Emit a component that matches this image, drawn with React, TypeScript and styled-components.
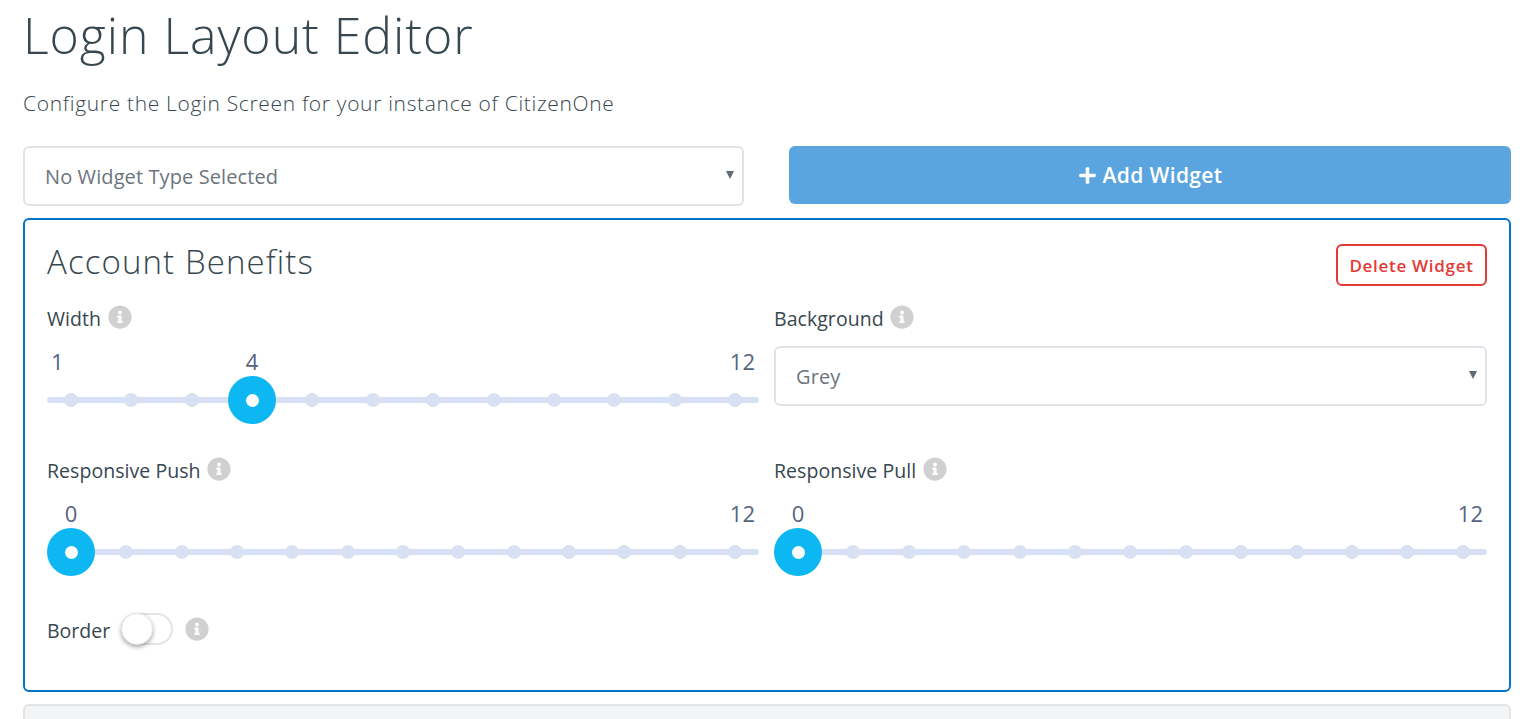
import * as React from 'react';
import styled, { createGlobalStyle } from 'styled-components';
import { FaInfoCircle, FaPlus } from 'react-icons/fa';

const GlobalStyle = createGlobalStyle`
  html, body {
    margin: 0;
    height: 100%;
    overflow: hidden;
    background: #fff;
    font-family: "Open Sans", "Noto Sans", sans-serif;
    color: #37474f;
  }
  * { box-sizing: border-box; }
`;

const Page = styled.div`
  width: 1525px;
  height: 719px;
  overflow: hidden;
  padding: 0 14px 0 23px;
`;

const Title = styled.h1`
  margin: 0;
  height: 70px;
  font-size: 50px;
  line-height: 70px;
  font-weight: 300;
  letter-spacing: 0.95px;
  color: #37474f;
`;

const Subtitle = styled.p`
  margin: 0;
  padding-top: 19px;
  height: 76px;
  font-size: 21px;
  line-height: 28px;
  font-weight: 300;
  letter-spacing: 0.67px;
  color: #37474f;
`;

const Toolbar = styled.div`
  display: grid;
  grid-template-columns: 721px 722px;
  column-gap: 45px;
  align-items: start;
  margin-bottom: 12px;
`;

const SelectWrap = styled.div`
  position: relative;
  &::after {
    content: '';
    position: absolute;
    right: 10px;
    top: 25px;
    border-left: 4.5px solid transparent;
    border-right: 4.5px solid transparent;
    border-top: 8px solid #5f6b75;
  }
`;

const Select = styled.select`
  display: block;
  width: 100%;
  height: 60px;
  padding: 1px 20px 0;
  appearance: none;
  background: #fff;
  border: 2px solid #dfe3e8;
  border-radius: 6px;
  font-family: inherit;
  font-size: 20px;
  letter-spacing: 0.1px;
  color: #6c757d;
  outline: none;
`;

const AddButton = styled.button`
  height: 58px;
  display: flex;
  align-items: center;
  justify-content: center;
  gap: 6px;
  border: none;
  border-radius: 6px;
  background: #5aa5df;
  color: #fff;
  font-family: inherit;
  font-size: 21px;
  font-weight: 600;
  letter-spacing: 0.35px;
`;

const Card = styled.section`
  height: 474px;
  border: 2px solid #0275c9;
  border-radius: 6px;
  padding: 24px 22px 0;
`;

const CardHeader = styled.div`
  display: flex;
  justify-content: space-between;
  align-items: flex-start;
  height: 58px;
`;

const CardTitle = styled.h2`
  margin: 0;
  font-size: 33px;
  line-height: 36px;
  font-weight: 300;
  letter-spacing: 1.1px;
  color: #37474f;
`;

const DeleteButton = styled.button`
  width: 151px;
  height: 42px;
  padding: 0;
  background: #fff;
  border: 2px solid #e53935;
  border-radius: 6px;
  color: #e53935;
  font-family: inherit;
  font-size: 17px;
  font-weight: 600;
  letter-spacing: 0.7px;
`;

const Fields = styled.div`
  display: grid;
  grid-template-columns: 712px 713px;
  column-gap: 15px;
  grid-auto-rows: 152px;
`;

const Field = styled.div`
  min-width: 0;
`;

const Label = styled.div`
  display: flex;
  align-items: center;
  gap: 6.5px;
  height: 30px;
  margin-bottom: 14px;
  font-size: 19.5px;
  letter-spacing: 0.05px;
  color: #37474f;
`;

const LabelText = styled.span`
  position: relative;
  top: 1px;
`;

const Info = styled(FaInfoCircle)`
  width: 24px;
  height: 24px;
  color: #d0d0d0;
  flex: none;
`;

const Slider = styled.div`
  padding-top: 3px;
`;

const Bounds = styled.div<{ $hideMin?: boolean }>`
  display: flex;
  justify-content: space-between;
  height: 24px;
  padding: 0 4px;
  font-size: 22px;
  line-height: 24px;
  color: #55647f;
  & > span:first-child {
    visibility: ${p => (p.$hideMin ? 'hidden' : 'visible')};
  }
`;

const Track = styled.div`
  display: flex;
  justify-content: space-between;
  align-items: center;
  height: 6px;
  margin-top: 24px;
  padding: 0 17px;
  border-radius: 3px;
  background: #d8e0f3;
`;

const Tick = styled.span`
  position: relative;
  flex: none;
  width: 14px;
  height: 14px;
  border-radius: 50%;
  background: #d8e0f3;
`;

const Thumb = styled.span`
  position: absolute;
  left: -17px;
  top: -17px;
  width: 48px;
  height: 48px;
  border-radius: 50%;
  background: #0db7f2;
  display: flex;
  align-items: center;
  justify-content: center;
  &::after {
    content: '';
    width: 13px;
    height: 13px;
    border-radius: 50%;
    background: #fff;
  }
`;

const Bubble = styled.span`
  position: absolute;
  left: 0;
  right: 0;
  top: -44px;
  text-align: center;
  font-size: 22px;
  line-height: 24px;
  color: #55647f;
`;

const SwitchRow = styled.div`
  display: flex;
  align-items: center;
  height: 32px;
  margin-top: 7px;
  font-size: 19.5px;
  color: #37474f;
`;

const SwitchTrack = styled.span`
  position: relative;
  width: 52px;
  height: 32px;
  margin: 0 12px 0 11px;
  border: 2px solid #e4e4e4;
  border-radius: 16px;
  background: #fff;
`;

const SwitchKnob = styled.span`
  position: absolute;
  left: -2px;
  top: -2px;
  width: 32px;
  height: 32px;
  border-radius: 50%;
  background: #fff;
  border: 1px solid #e8e8e8;
  box-shadow: 0 2px 4px rgba(0, 0, 0, 0.35);
`;

const NextPanel = styled.div`
  height: 60px;
  margin-top: 12px;
  background: #f3f4f6;
  border: 2px solid #e2e4e8;
  border-radius: 6px;
`;

type RangeProps = { min: number; max: number; value: number };

function Range({ min, max, value }: RangeProps) {
  const steps: number[] = [];
  for (let i = min; i <= max; i++) steps.push(i);
  return (
    <Slider>
      <Bounds $hideMin={value === min}>
        <span>{min}</span>
        <span>{max}</span>
      </Bounds>
      <Track>
        {steps.map(s => (
          <Tick key={s}>
            {s === value && (
              <>
                <Bubble>{value}</Bubble>
                <Thumb />
              </>
            )}
          </Tick>
        ))}
      </Track>
    </Slider>
  );
}

export default function App() {
  return (
    <Page>
      <GlobalStyle />
      <Title>Login Layout Editor</Title>
      <Subtitle>Configure the Login Screen for your instance of CitizenOne</Subtitle>
      <Toolbar>
        <SelectWrap>
          <Select defaultValue="none">
            <option value="none">No Widget Type Selected</option>
          </Select>
        </SelectWrap>
        <AddButton>
          <FaPlus size={19} />
          Add Widget
        </AddButton>
      </Toolbar>
      <Card>
        <CardHeader>
          <CardTitle>Account Benefits</CardTitle>
          <DeleteButton>Delete Widget</DeleteButton>
        </CardHeader>
        <Fields>
          <Field>
            <Label><LabelText>Width</LabelText> <Info /></Label>
            <Range min={1} max={12} value={4} />
          </Field>
          <Field>
            <Label><LabelText>Background</LabelText> <Info /></Label>
            <SelectWrap>
              <Select defaultValue="grey">
                <option value="grey">Grey</option>
              </Select>
            </SelectWrap>
          </Field>
          <Field>
            <Label><LabelText>Responsive Push</LabelText> <Info /></Label>
            <Range min={0} max={12} value={0} />
          </Field>
          <Field>
            <Label><LabelText>Responsive Pull</LabelText> <Info /></Label>
            <Range min={0} max={12} value={0} />
          </Field>
        </Fields>
        <SwitchRow>
          <LabelText>Border</LabelText>
          <SwitchTrack><SwitchKnob /></SwitchTrack>
          <Info />
        </SwitchRow>
      </Card>
      <NextPanel />
    </Page>
  );
}
